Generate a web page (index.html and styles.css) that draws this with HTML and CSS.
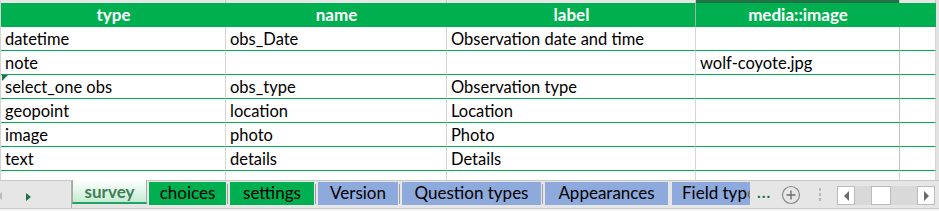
FILE: index.html
```html
<!DOCTYPE html>
<html lang="en">
<head>
    <meta charset="UTF-8">
    <title>survey</title>
    <link rel="stylesheet" href="styles.css">
</head>
<body>

<div class="sheet">
    <div class="top"></div><div class="top"></div><div class="top"></div><div class="top sel"></div><div class="top"></div>

    <div class="hd">type</div>
    <div class="hd">name</div>
    <div class="hd">label</div>
    <div class="hd hd-sel">media::image</div>
    <div class="hd"></div>

    <div class="c">datetime</div><div class="c">obs_Date</div><div class="c">Observation date and time</div><div class="c"></div><div class="c"></div>
    <div class="c">note</div><div class="c"></div><div class="c"></div><div class="c">wolf-coyote.jpg</div><div class="c"></div>
    <div class="c flag">select_one obs</div><div class="c">obs_type</div><div class="c">Observation type</div><div class="c"></div><div class="c"></div>
    <div class="c">geopoint</div><div class="c">location</div><div class="c">Location</div><div class="c"></div><div class="c"></div>
    <div class="c">image</div><div class="c">photo</div><div class="c">Photo</div><div class="c"></div><div class="c"></div>
    <div class="c">text</div><div class="c">details</div><div class="c">Details</div><div class="c"></div><div class="c"></div>

    <div class="e"></div><div class="e"></div><div class="e"></div><div class="e"></div><div class="e"></div>
</div>

<div class="tabbar">
    <div class="nav">
        <span class="arr-l"></span>
        <span class="arr-r"></span>
    </div>
    <div class="tab active">survey</div>
    <div class="tabs">
        <div class="tab green">choices</div>
        <div class="tab green">settings</div>
        <div class="tab blue">Version</div>
        <div class="tab blue">Question types</div>
        <div class="tab blue">Appearances</div>
        <div class="tab blue clip">Field typ<span class="cut">e</span></div>
    </div>
    <div class="more">...</div>
    <div class="add">
        <svg width="20" height="20" viewBox="0 0 20 20">
            <circle cx="10" cy="10" r="8.5" fill="none" stroke="#8a8a8a" stroke-width="1.2"/>
            <path d="M10 5.5v9M5.5 10h9" stroke="#6e6e6e" stroke-width="1.4"/>
        </svg>
    </div>
    <div class="grip"><i></i><i></i><i></i></div>
    <div class="hscroll">
        <div class="btn"><span class="tri-l"></span></div>
        <div class="track"><div class="thumb"></div></div>
        <div class="btn"><span class="tri-r"></span></div>
    </div>
</div>
<div class="bottom"></div>

</body>
</html>
```

FILE: styles.css
```css
body {
    margin: 0;
    width: 939px;
    height: 211px;
    overflow: hidden;
    background-color: #fff;
    font-family: 'Lato', 'Liberation Sans', sans-serif;
    font-size: 16.5px;
    color: #000;
}

.sheet {
    display: grid;
    grid-template-columns: 225px 221px 249px 204px 36px;
    grid-template-rows: 3px 24px repeat(6, 24px) 9px;
    border-left: 1px solid #d4d4d4;
    width: 935px;
    border-right: 4px solid #e2e2e2;
}

.top {
    background-color: #e6e6e6;
    border-right: 1px solid #c8c8c8;
}

.top.sel {
    background-color: #217346;
}

.hd {
    background-color: #00b050;
    color: #fff;
    font-weight: bold;
    font-size: 17px;
    text-align: center;
    line-height: 23px;
    border-bottom: 1px solid #00b050;
}

.hd-sel {
    border-left: 1px solid #9fb4a5;
    margin-left: -1px;
}

.c {
    border-right: 1px solid #d4d4d4;
    border-bottom: 1px solid #00b050;
    padding: 2px 0 0 4px;
    line-height: 21px;
    white-space: nowrap;
    position: relative;
}

.c:nth-child(5n+4) {
    border-right-color: #c2c2c2;
}

/* triangulo verde do canto da celula */
.flag::before {
    content: '';
    position: absolute;
    left: 1px;
    top: 0;
    border-top: 6px solid #217346;
    border-right: 6px solid transparent;
}

.e {
    border-right: 1px solid #d4d4d4;
}

/* Barra das abas */
.tabbar {
    display: flex;
    align-items: flex-start;
    height: 27px;
    background-color: #e6e6e6;
    border-top: 1px solid #c6c6c6;
}

.nav {
    width: 72px;
    height: 27px;
    position: relative;
    border-right: 1px solid #b0b0b0;
    box-sizing: border-box;
}

.arr-l {
    position: absolute;
    left: -3px;
    top: 11px;
    border-right: 5px solid #bdbdbd;
    border-top: 4px solid transparent;
    border-bottom: 4px solid transparent;
}

.arr-r {
    position: absolute;
    left: 26px;
    top: 12px;
    border-left: 5px solid #217346;
    border-top: 4px solid transparent;
    border-bottom: 4px solid transparent;
}

.tab {
    height: 23px;
    line-height: 22px;
    font-size: 17px;
    text-align: center;
    white-space: nowrap;
    position: relative;
    box-sizing: border-box;
}

.tab.active {
    width: 75px;
    height: 24px;
    margin-top: -1px;
    background: linear-gradient(#ffffff, #c5ecd2);
    border: 1px solid #a8a8a8;
    border-top: none;
    border-bottom: 2px solid #21a366;
    color: #3e7d56;
    font-weight: bold;
    line-height: 23px;
}

.tabs {
    display: flex;
    margin-top: 1px;
    margin-left: 2px;
}

.tab + .tab {
    margin-left: 4px;
}

.tab + .tab::before {
    content: '';
    position: absolute;
    left: -3px;
    top: 2px;
    bottom: 1px;
    width: 1px;
    background-color: #a0a0a0;
}

.tab.green {
    background-color: #00b050;
}

.tab.blue {
    background-color: #8ea9db;
}

.tabs .tab:nth-child(1) { width: 77px; }
.tabs .tab:nth-child(2) { width: 84px; }
.tabs .tab:nth-child(3) { width: 80px; }
.tabs .tab:nth-child(4) { width: 139px; }
.tabs .tab:nth-child(5) { width: 123px; }

.tab.clip {
    width: 78px;
    overflow: hidden;
    text-align: left;
    padding-left: 10px;
}

.cut {
    color: #6a6a6a;
}

.more {
    margin-left: 7px;
    color: #217346;
    font-weight: bold;
    font-size: 16px;
    line-height: 22px;
    letter-spacing: 1px;
}

.add {
    margin-left: 10px;
    margin-top: 4px;
    height: 20px;
}

.grip {
    margin-left: 18px;
    margin-top: 7px;
    display: flex;
    flex-direction: column;
    gap: 2px;
}

.grip i {
    display: block;
    width: 2px;
    height: 3px;
    background-color: #b8b8b8;
}

.hscroll {
    display: flex;
    margin-left: 16px;
    margin-top: 5px;
    height: 19px;
}

.btn {
    width: 18px;
    height: 19px;
    box-sizing: border-box;
    background-color: #fff;
    border: 1px solid #bcbcbc;
    display: flex;
    align-items: center;
    justify-content: center;
}

.tri-l {
    border-right: 5px solid #6b6b6b;
    border-top: 5px solid transparent;
    border-bottom: 5px solid transparent;
}

.tri-r {
    border-left: 5px solid #6b6b6b;
    border-top: 5px solid transparent;
    border-bottom: 5px solid transparent;
}

.track {
    width: 62px;
    background-color: #d9d9d9;
    padding-left: 16px;
    box-sizing: border-box;
}

.thumb {
    width: 20px;
    height: 19px;
    box-sizing: border-box;
    background-color: #fff;
    border: 1px solid #bcbcbc;
}

.bottom {
    height: 3px;
    border-top: 1px solid #c8c8c8;
    background-color: #f3f3f3;
}
```
